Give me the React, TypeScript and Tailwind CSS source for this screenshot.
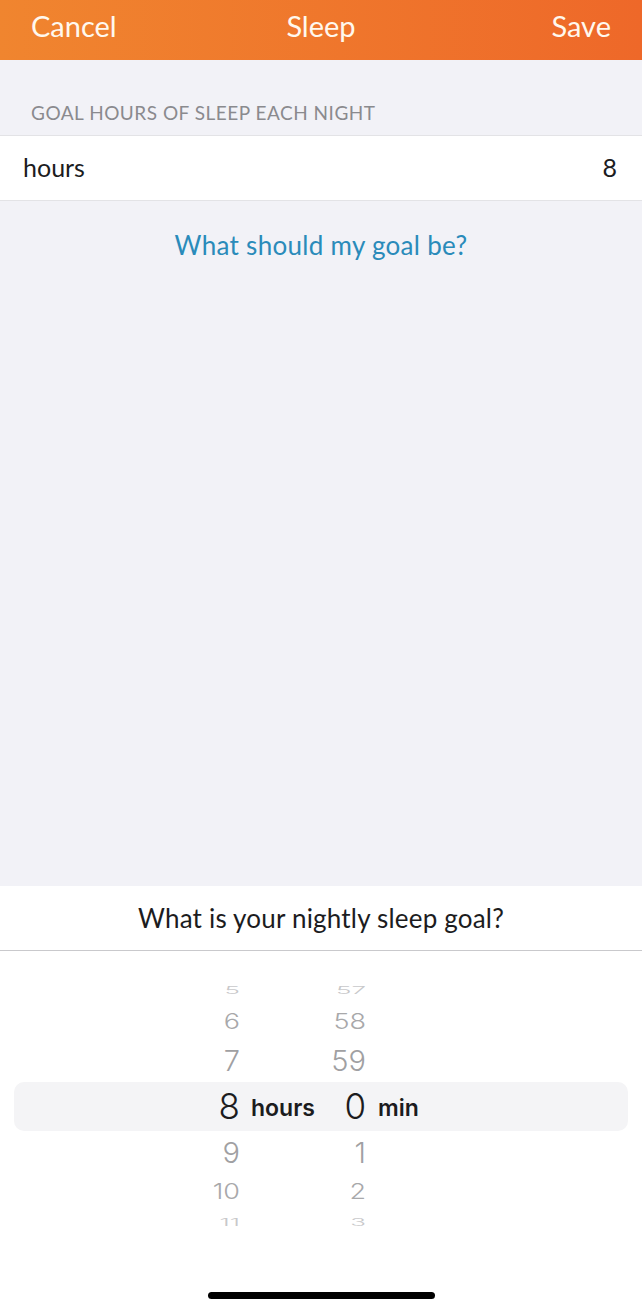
import React from "react";

const avenir = { fontFamily: "Lato, 'Noto Sans', sans-serif" };

type Row = {
  m: string;
  hr: string;
  size: string;
  color: string;
  sy: string;
  height: string;
  selected?: boolean;
};

const rows: Row[] = [
  { hr: "5", m: "57", size: "text-[26px]", color: "text-[#c8c8ca]", sy: "scale-y-[0.4]", height: "h-[28px]" },
  { hr: "6", m: "58", size: "text-[27px]", color: "text-[#a8a8aa]", sy: "scale-y-[0.8]", height: "h-[34px]" },
  { hr: "7", m: "59", size: "text-[29px]", color: "text-[#a0a0a2]", sy: "scale-y-[0.97]", height: "h-[44px]" },
  { hr: "8", m: "0", size: "text-[35px]", color: "text-[#1c1c1e]", sy: "scale-y-100", height: "h-[49px]", selected: true },
  { hr: "9", m: "1", size: "text-[29px]", color: "text-[#a0a0a2]", sy: "scale-y-[0.97]", height: "h-[43px]" },
  { hr: "10", m: "2", size: "text-[27px]", color: "text-[#a8a8aa]", sy: "scale-y-[0.8]", height: "h-[34px]" },
  { hr: "11", m: "3", size: "text-[26px]", color: "text-[#c8c8ca]", sy: "scale-y-[0.4]", height: "h-[28px]" },
];

export default function App() {
  return (
    <div className="w-[642px] h-[1312px] flex flex-col bg-[#f2f2f7] overflow-hidden" style={avenir}>
      {/* Header */}
      <div className="h-[60px] shrink-0 grid grid-cols-3 items-center px-[31px] pb-[9px] bg-gradient-to-r from-[#f0852f] to-[#ee6829] text-[#fff8ee] text-[29px] leading-none">
        <span className="justify-self-start">Cancel</span>
        <span className="justify-self-center">Sleep</span>
        <span className="justify-self-end">Save</span>
      </div>

      {/* Section header */}
      <div className="h-[75px] shrink-0 flex items-end pb-[11px] px-[31px]">
        <span className="text-[19px] leading-[22px] text-[#8a8a8e] tracking-[0.5px]">GOAL HOURS OF SLEEP EACH NIGHT</span>
      </div>

      {/* Row */}
      <div className="h-[66px] shrink-0 bg-white border-y border-[#e3e3e6] flex items-center justify-between pl-[23px] pr-[25px] text-[25px] text-[#1c1c1e]">
        <span>hours</span>
        <span>8</span>
      </div>

      <div className="mt-[28px] text-center text-[26px] leading-[32px] tracking-[0.3px] text-[#2a8bba]">What should my goal be?</div>

      <div className="flex-1" />

      {/* Bottom sheet */}
      <div className="h-[426px] shrink-0 bg-white flex flex-col">
        <div className="h-[64px] flex items-center justify-center text-[26px] tracking-[0.2px] text-[#1c1c1e]">
          What is your nightly sleep goal?
        </div>
        <div className="h-px bg-[#c9c9cc]" />
        <div className="pt-[25px] px-[14px] flex flex-col" style={{ fontFamily: "Inter, Roboto, sans-serif" }}>
          {rows.map((r) => (
            <div
              key={r.hr}
              className={`${r.height} flex items-center overflow-hidden ${r.selected ? "bg-[#f4f4f6] rounded-[10px]" : ""}`}
            >
              <div className="w-[186px] shrink-0" />
              <div className={`w-[40px] shrink-0 text-right ${r.size} ${r.color} font-light leading-none transform ${r.sy}`}>{r.hr}</div>
              <div className="w-[88px] shrink-0 pl-[11px]">
                {r.selected && <span className="text-[23px] font-semibold text-[#1c1c1e] leading-none relative top-[3px]">hours</span>}
              </div>
              <div className={`w-[38px] shrink-0 text-right ${r.size} ${r.color} font-light leading-none transform ${r.sy}`}>{r.m}</div>
              <div className="pl-[12px]">
                {r.selected && <span className="text-[23px] font-semibold text-[#1c1c1e] leading-none relative top-[3px]">min</span>}
              </div>
            </div>
          ))}
        </div>
        <div className="flex-1" />
        <div className="mb-[13px] self-center w-[227px] h-[7px] rounded-full bg-black" />
      </div>
    </div>
  );
}
